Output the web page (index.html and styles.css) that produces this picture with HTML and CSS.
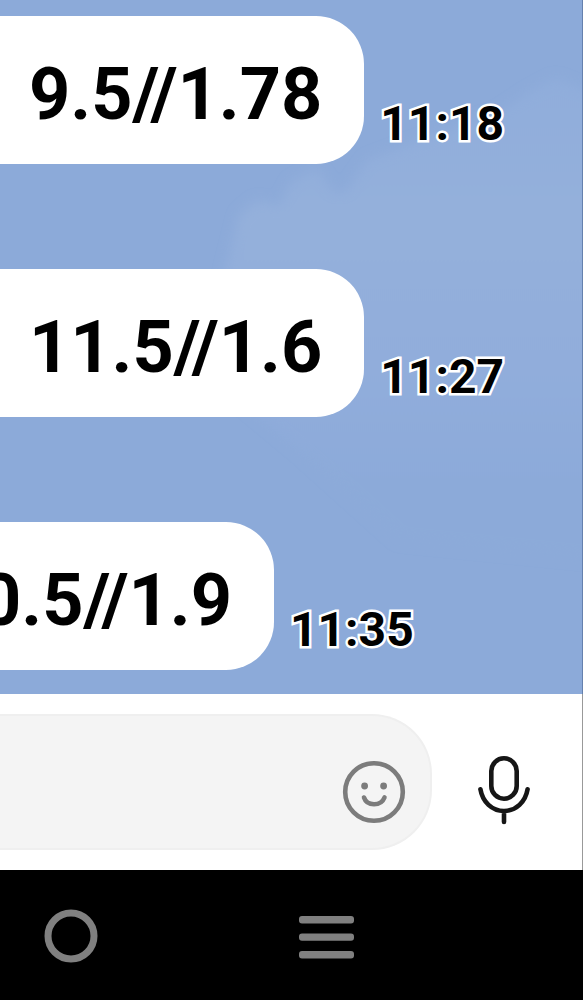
FILE: index.html
```
<!DOCTYPE html>
<html lang="en">
<head>
  <meta charset="UTF-8">
  <meta name="viewport" content="width=device-width, initial-scale=1.0">
  <title>Chat</title>
  <link rel="stylesheet" href="styles.css">
</head>
<body>
  <main class="chat">
    <svg class="sky" viewBox="0 0 583 694" preserveAspectRatio="xMaxYMin slice" aria-hidden="true">
      <defs>
        <filter id="soft" x="-20%" y="-20%" width="140%" height="140%">
          <feGaussianBlur stdDeviation="6"/>
        </filter>
        <linearGradient id="cloud" x1="0" y1="0" x2="0" y2="1">
          <stop offset="0" stop-color="#90addb"/>
          <stop offset="0.3" stop-color="#94b0db"/>
          <stop offset="0.6" stop-color="#91addb"/>
          <stop offset="0.85" stop-color="#8caad9"/>
        </linearGradient>
      </defs>
      <path fill="url(#cloud)" filter="url(#soft)" d="M225 275 L234 240 L240 215 L258 200 L280 205 L292 182 L318 168 L335 192 L346 192 L368 160 L400 148 L450 130 L500 112 L530 92 L556 78 L600 95 L600 560 L400 540 L300 450 L240 400 Z"/>
    </svg>

    <div class="message">
      <div class="bubble">9.5//1.78</div>
      <time class="time">11:18</time>
    </div>
    <div class="message">
      <div class="bubble">11.5//1.6</div>
      <time class="time">11:27</time>
    </div>
    <div class="message shifted">
      <div class="bubble">0.5//1.9</div>
      <time class="time">11:35</time>
    </div>
  </main>

  <form class="composer">
    <div class="field">
      <input class="text" type="text" aria-label="Message">
      <button class="icon-button" type="button" aria-label="Emoji">
        <svg width="64" height="64" viewBox="0 0 64 64" fill="none" stroke="#7c7c7c" stroke-width="4.6" stroke-linecap="round">
          <circle cx="32" cy="32" r="28.8"/>
          <circle cx="22.6" cy="26" r="3.4" fill="#7c7c7c" stroke="none"/>
          <circle cx="41.6" cy="26" r="3.4" fill="#7c7c7c" stroke="none"/>
          <path d="M22 37.5 C25 46.5 39 46.5 42.5 37.5"/>
        </svg>
      </button>
    </div>
    <button class="icon-button" type="button" aria-label="Voice message">
      <svg width="56" height="72" viewBox="0 0 56 72" fill="none" stroke="#161616" stroke-width="4.6" stroke-linecap="round">
        <rect x="15.3" y="4.3" width="25.4" height="40.4" rx="12.7"/>
        <path d="M4.4 35.2 C6.5 48 16 57 28 57 C40 57 49.5 48 51.6 35.2 M28 57 V68"/>
      </svg>
    </button>
  </form>

  <nav class="navbar">
    <button class="icon-button" type="button" aria-label="Home">
      <svg width="56" height="56" viewBox="0 0 56 56" fill="none" stroke="#808080" stroke-width="7">
        <circle cx="28" cy="28" r="23"/>
      </svg>
    </button>
    <button class="icon-button" type="button" aria-label="Recent apps">
      <svg width="56" height="56" viewBox="0 0 56 56" fill="#808080">
        <rect x="1" y="8" width="55" height="7.4" rx="3"/>
        <rect x="1" y="25.4" width="55" height="7.4" rx="3"/>
        <rect x="1" y="43" width="55" height="7.4" rx="3"/>
      </svg>
    </button>
  </nav>
</body>
</html>
```

FILE: styles.css
```
* {
  box-sizing: border-box;
}

body {
  margin: 0;
  min-height: 100vh;
  display: flex;
  flex-direction: column;
  font-family: Roboto, sans-serif;
  background: #000;
  overflow-x: hidden;
}

.chat {
  position: relative;
  flex: 1;
  display: flex;
  flex-direction: column;
  gap: 105px;
  padding: 16px 0 24px;
  background: #8caad9;
  border-right: 1px solid #6581ae;
  overflow: hidden;
}

/* wallpaper behind the messages */
.sky {
  position: absolute;
  top: 0;
  left: 0;
  width: 100%;
  height: 100%;
}

.message {
  position: relative;
  display: flex;
  align-items: flex-end;
  gap: 16px;
}

.message.shifted {
  margin-left: -49px;
}

.bubble {
  padding: 37px 42px 27px 29px;
  background: #fff;
  border-radius: 0 48px 48px 0;
  color: #000;
  font-size: 72px;
  font-weight: 700;
  line-height: 84px;
}

.time {
  margin-bottom: 12px;
  color: #000;
  font-size: 48px;
  font-weight: 700;
  line-height: 56px;
  -webkit-text-stroke: 5px #fff;
  paint-order: stroke fill;
}

.composer {
  display: flex;
  align-items: center;
  gap: 44px;
  padding: 20px 50px 20px 0;
  background: #fff;
  border-right: 1px solid #999;
}

.field {
  flex: 1;
  min-width: 0;
  display: flex;
  align-items: center;
  height: 136px;
  padding: 20px 24px 0 0;
  background: #f4f4f4;
  border: 2px solid #efefef;
  border-left: none;
  border-radius: 0 60px 60px 0;
}

.text {
  flex: 1;
  min-width: 0;
  height: 84px;
  padding: 0 28px;
  border: none;
  outline: none;
  background: none;
  font-family: inherit;
  font-size: 48px;
}

.icon-button {
  padding: 0;
  border: none;
  background: none;
  cursor: pointer;
}

.icon-button svg {
  display: block;
}

.composer > .icon-button {
  padding-top: 16px;
}

.navbar {
  display: flex;
  align-items: center;
  gap: 199px;
  height: 130px;
  padding: 2px 43px 0;
  background: #000;
}
```
